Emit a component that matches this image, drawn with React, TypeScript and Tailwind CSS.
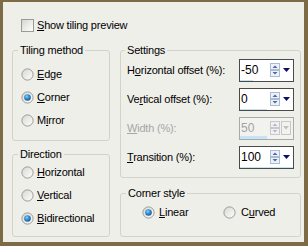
import React, { useId } from "react";

const Radio: React.FC<{ checked?: boolean }> = ({ checked }) => {
  const id = useId().replace(/:/g, "");
  return (
    <svg width="13" height="13" viewBox="0 0 13 13" className="shrink-0">
      <defs>
        <linearGradient id={`bg${id}`} x1="0" y1="0" x2="1" y2="1">
          <stop offset="0" stopColor="#d6d6d0" />
          <stop offset="1" stopColor="#ffffff" />
        </linearGradient>
        <radialGradient id={`dot${id}`} cx="0.4" cy="0.35" r="0.7">
          <stop offset="0" stopColor="#8fd0f5" />
          <stop offset="0.5" stopColor="#2d8ad0" />
          <stop offset="1" stopColor="#12579c" />
        </radialGradient>
      </defs>
      <circle cx="6.5" cy="6.5" r="5.6" fill={`url(#bg${id})`} stroke="#9a9a96" strokeWidth="1" />
      {checked && <circle cx="6.5" cy="6.5" r="3.3" fill={`url(#dot${id})`} />}
    </svg>
  );
};

const Checkbox: React.FC = () => (
  <div className="w-[13px] h-[13px] shrink-0 border border-[#9a9a96] bg-gradient-to-br from-[#d6d6d0] to-white" />
);

const Label: React.FC<{ text: string; u: number }> = ({ text, u }) => (
  <span className="whitespace-nowrap">
    {text.slice(0, u)}
    <span className="underline underline-offset-1">{text[u]}</span>
    {text.slice(u + 1)}
  </span>
);

const RadioRow: React.FC<{ text: string; u: number; checked?: boolean }> = ({ text, u, checked }) => (
  <div className="h-[23px] flex items-center gap-[3px]">
    <Radio checked={checked} />
    <Label text={text} u={u} />
  </div>
);

const Spinner: React.FC<{ disabled?: boolean }> = ({ disabled }) => {
  const arrow = disabled ? "#b8b8b8" : "#4a68a8";
  const edge = disabled ? "#c8c8c8" : "#a9bcd6";
  return (
    <svg width="10" height="14" viewBox="0 0 10 14" className="shrink-0 mt-[3px]">
      <rect x="0.5" y="0.5" width="9" height="6" fill="#eef1f6" stroke={edge} />
      <rect x="0.5" y="7.5" width="9" height="6" fill="#eef1f6" stroke={edge} />
      <polygon points="2.5,5 7.5,5 5,2.5" fill={arrow} />
      <polygon points="2.5,9 7.5,9 5,11.5" fill={arrow} />
    </svg>
  );
};

const SpinBox: React.FC<{ value: string; pct: number; disabled?: boolean }> = ({ value, pct, disabled }) => (
  <div
    className={`w-[55px] h-[23px] border flex flex-col ${
      disabled ? "border-[#a9a9a6] bg-[#f2f2ee] text-[#a3a3a3]" : "border-[#4a4a4a] bg-white text-black"
    }`}
  >
    <div className="flex-1 flex items-start">
      <span className="w-[30px] pl-[1px] pt-[3px] text-[12px] leading-[14px] tracking-normal">{value}</span>
      <Spinner disabled={disabled} />
      {disabled ? (
        <div className="ml-[1px] mt-[3px] w-[10px] h-[14px] border border-[#c8c8c8] flex items-center justify-center">
          <svg width="6" height="4" viewBox="0 0 6 4">
            <polygon points="0,0 6,0 3,3.5" fill="#c0c0c0" />
          </svg>
        </div>
      ) : (
        <div className="w-[13px] h-[20px] flex items-center justify-center">
          <svg width="7" height="4" viewBox="0 0 7 4">
            <polygon points="0,0 7,0 3.5,4" fill="#0b1064" />
          </svg>
        </div>
      )}
    </div>
    <div className="h-[3px] bg-[#c6e3f7]" style={{ width: `${pct}%` }} />
  </div>
);

const Group: React.FC<{ title: string; className: string; ml?: string; children: React.ReactNode }> = ({
  title,
  className,
  ml = "ml-[5px]",
  children,
}) => (
  <fieldset className={`border border-[#d3d3cc] rounded-[3px] p-0 m-0 min-w-0 ${className}`}>
    <legend className={`${ml} px-[2px] leading-[14px]`}>{title}</legend>
    {children}
  </fieldset>
);

const SettingRow: React.FC<{ text: string; u: number; value: string; pct: number; disabled?: boolean }> = ({
  text,
  u,
  value,
  pct,
  disabled,
}) => (
  <div className="h-[23px] flex items-center justify-between">
    <span className={disabled ? "text-[#a6a6a6]" : ""}>
      <Label text={text} u={u} />
    </span>
    <SpinBox value={value} pct={pct} disabled={disabled} />
  </div>
);

export default function App() {
  return (
    <div className="w-[308px] h-[246px] box-border bg-[#efefea] border-[#7d6b45] border-l-[3px] border-t-[2px] border-r-[4px] border-b-[4px] font-['Liberation_Sans',Arial,sans-serif] text-[11px] leading-[13px] tracking-[-0.2px] text-black">
      <div className="pt-[17px] pl-[18px] h-[30px] flex items-end gap-[3px]">
        <Checkbox />
        <Label text="Show tiling preview" u={0} />
      </div>
      <div className="mt-[11px] pl-[9px] flex gap-[10px]">
        <div className="w-[98px] flex flex-col gap-[6px]">
          <Group title="Tiling method" className="h-[98px]">
            <div className="pt-[6px] pl-[8px]">
              <RadioRow text="Edge" u={0} />
              <RadioRow text="Corner" u={0} checked />
              <RadioRow text="Mirror" u={1} />
            </div>
          </Group>
          <Group title="Direction" className="h-[90px]">
            <div className="pl-[8px]">
              <RadioRow text="Horizontal" u={0} />
              <RadioRow text="Vertical" u={0} />
              <RadioRow text="Bidirectional" u={0} checked />
            </div>
          </Group>
        </div>
        <div className="w-[181px] flex flex-col gap-[8px]">
          <Group title="Settings" className="h-[135px]" ml="ml-[4px]">
            <div className="pt-[2px] pl-[6px] pr-[6px] flex flex-col gap-[6px]">
              <SettingRow text="Horizontal offset (%):" u={1} value="-50" pct={25} />
              <SettingRow text="Vertical offset (%):" u={2} value="0" pct={50} />
              <SettingRow text="Width (%):" u={0} value="50" pct={50} disabled />
              <SettingRow text="Transition (%):" u={0} value="100" pct={100} />
            </div>
          </Group>
          <Group title="Corner style" className="h-[51px]">
            <div className="pt-[1px] pl-[21px] flex">
              <div className="w-[81px] h-[23px] flex items-center gap-[3px]">
                <Radio checked />
                <span className="ml-[1px]">
                  <Label text="Linear" u={0} />
                </span>
              </div>
              <div className="h-[23px] flex items-center gap-[3px]">
                <Radio />
                <span className="ml-[2px]">
                  <Label text="Curved" u={1} />
                </span>
              </div>
            </div>
          </Group>
        </div>
      </div>
    </div>
  );
}
